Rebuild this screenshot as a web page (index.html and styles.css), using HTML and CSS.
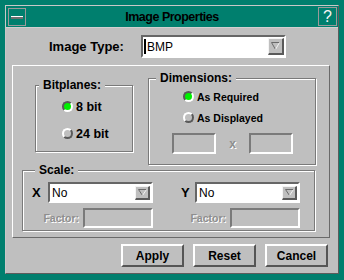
FILE: index.html
```html
<!DOCTYPE html>
<html>
    <head>
        <title>Image Properties</title>
        <link rel="stylesheet" href="styles.css">
    </head>
    <body>
        <div class="window">
            <div class="titlebar">
                <div class="menu_btn"><span class="menu_bar"></span></div>
                <div class="title">Image Properties</div>
                <div class="help_btn">?</div>
            </div>
            <div class="type_row">
                <span class="type_label">Image Type:</span>
                <div class="combo combo_type">
                    <span class="combo_text"><span class="cursor"></span>BMP</span>
                    <span class="drop_btn">
                        <svg width="9" height="8" viewBox="0 0 9 8"><path d="M0.5 0.5H8.5M0.5 0.5L4.5 7.5" stroke="#6a6a6a" fill="none"/><path d="M8.5 0.5L4.5 7.5" stroke="#f0f0f0" fill="none"/></svg>
                    </span>
                </div>
            </div>
            <div class="panel">
                <div class="panel_top">
                    <fieldset class="group bitplanes">
                        <legend>Bitplanes:</legend>
                        <div class="radios">
                            <div class="radio_row"><span class="radio on"></span>8 bit</div>
                            <div class="radio_row"><span class="radio"></span>24 bit</div>
                        </div>
                    </fieldset>
                    <fieldset class="group dimensions">
                        <legend>Dimensions:</legend>
                        <div class="radios">
                            <div class="radio_row"><span class="radio on"></span>As Required</div>
                            <div class="radio_row"><span class="radio"></span>As Displayed</div>
                        </div>
                        <div class="size_row">
                            <span class="field size_field"></span>
                            <span class="dim_text">x</span>
                            <span class="field size_field"></span>
                        </div>
                    </fieldset>
                </div>
                <fieldset class="group scale">
                    <legend>Scale:</legend>
                    <div class="scale_half half_x">
                        <div class="axis_row">
                            <span class="axis">X</span>
                            <div class="combo combo_small">
                                <span class="combo_text">No</span>
                                <span class="drop_btn">
                                    <svg width="9" height="7" viewBox="0 0 9 7"><path d="M0.5 0.5H8.5M0.5 0.5L4.5 6.5" stroke="#6a6a6a" fill="none"/><path d="M8.5 0.5L4.5 6.5" stroke="#f0f0f0" fill="none"/></svg>
                                </span>
                            </div>
                        </div>
                        <div class="factor_row">
                            <span class="dim_text">Factor:</span>
                            <span class="field factor_field"></span>
                        </div>
                    </div>
                    <div class="scale_half half_y">
                        <div class="axis_row">
                            <span class="axis">Y</span>
                            <div class="combo combo_small">
                                <span class="combo_text">No</span>
                                <span class="drop_btn">
                                    <svg width="9" height="7" viewBox="0 0 9 7"><path d="M0.5 0.5H8.5M0.5 0.5L4.5 6.5" stroke="#6a6a6a" fill="none"/><path d="M8.5 0.5L4.5 6.5" stroke="#f0f0f0" fill="none"/></svg>
                                </span>
                            </div>
                        </div>
                        <div class="factor_row">
                            <span class="dim_text">Factor:</span>
                            <span class="field factor_field"></span>
                        </div>
                    </div>
                </fieldset>
            </div>
            <div class="buttons">
                <button type="button" class="btn">Apply</button>
                <button type="button" class="btn">Reset</button>
                <button type="button" class="btn">Cancel</button>
            </div>
        </div>
    </body>
</html>
```

FILE: styles.css
```css
body {
	margin: 0;
	background: #007f6e;
	font-family: "Liberation Sans", Arial, sans-serif;
	color: #000000;
}
.window {
	margin: 5px 0 0 5px;
	width: 334px;
	height: 269px;
	box-sizing: border-box;
	border: 1px solid;
	border-color: #c8c8c8 #5c5c5c #5c5c5c #c8c8c8;
	background: #bfbfbf;
}
.titlebar {
	display: flex;
	align-items: center;
	height: 21px;
	padding: 0 1px 0 2px;
	background: #007f6e;
	border-bottom: 1px solid #d0d0d0;
}
.menu_btn {
	display: flex;
	align-items: center;
	justify-content: center;
	width: 18px;
	height: 18px;
	box-sizing: border-box;
	border: 1px solid #9a9a9a;
}
.menu_bar {
	width: 12px;
	height: 1px;
	margin-top: 1px;
	background: #ffffff;
	border-bottom: 2px solid #6e6e6e;
}
.title {
	flex: 1;
	text-align: center;
	font-size: 12.5px;
	font-weight: bold;
	letter-spacing: -0.5px;
}
.help_btn {
	width: 19px;
	height: 19px;
	box-sizing: border-box;
	border: 1px solid #9a9a9a;
	color: #f4f4f4;
	font-size: 16px;
	line-height: 18px;
	text-align: center;
}
.type_row {
	display: flex;
	align-items: center;
	margin: 7px 0 0 43px;
}
.type_label {
	width: 92px;
	font-size: 13px;
	font-weight: bold;
}
.combo {
	display: flex;
	align-items: center;
	justify-content: space-between;
	box-sizing: border-box;
	border: 2px solid;
	border-color: #666666 #ffffff #ffffff #666666;
	background: #ffffff;
}
.combo_type {
	width: 145px;
	height: 23px;
}
.combo_small {
	width: 105px;
	height: 21px;
	padding-right: 1px;
}
.combo_text {
	display: flex;
	align-items: center;
	padding-left: 2px;
	font-size: 12px;
}
.cursor {
	width: 2px;
	height: 15px;
	margin: 0 1px 0 -1px;
	background: #000000;
}
.drop_btn {
	display: flex;
	align-items: center;
	justify-content: center;
	width: 16px;
	height: 17px;
	box-sizing: border-box;
	border: solid;
	border-width: 1px 2px 2px 1px;
	border-color: #f4f4f4 #5a5a5a #5a5a5a #f4f4f4;
	background: #bfbfbf;
}
.combo_small .drop_btn {
	width: 15px;
	height: 14px;
}
.panel {
	width: 318px;
	height: 173px;
	margin: 7px 0 0 6px;
	box-sizing: border-box;
	border: 1px solid;
	border-color: #ffffff #6a6a6a #6a6a6a #ffffff;
}
.panel_top {
	display: flex;
	align-items: flex-start;
}
.group {
	margin: 0;
	padding: 0;
	min-width: 0;
	box-sizing: border-box;
	border: 1px solid #7a7a7a;
	box-shadow: inset 1px 1px 0 #ffffff, 1px 1px 0 #ffffff;
}
.group legend {
	padding: 0 4px;
	font-size: 12px;
	font-weight: bold;
	line-height: 14px;
	background: #bfbfbf;
}
.bitplanes {
	width: 98px;
	height: 74px;
	margin: 12px 0 0 22px;
}
.bitplanes legend {
	margin-left: 3px;
}
.dimensions {
	width: 168px;
	height: 94px;
	margin: 5px 0 0 15px;
}
.dimensions legend {
	margin-left: 7px;
}
.radios {
	padding-top: 1px;
}
.radio_row {
	display: flex;
	align-items: center;
	gap: 3px;
	font-weight: bold;
}
.bitplanes .radio_row {
	height: 27px;
	padding-left: 26px;
	font-size: 12.5px;
}
.dimensions .radio_row {
	height: 21px;
	padding-left: 34px;
	font-size: 10.5px;
}
.radio {
	width: 11px;
	height: 11px;
	box-sizing: border-box;
	border: 2px solid;
	border-radius: 50%;
	border-color: #ffffff #5a5a5a #5a5a5a #ffffff;
}
.radio.on {
	border-color: #5a5a5a #ffffff #ffffff #5a5a5a;
	background: #00f000;
}
.field {
	box-sizing: border-box;
	border: 2px solid;
	border-color: #7a7a7a #ffffff #ffffff #7a7a7a;
}
.size_row {
	display: flex;
	align-items: center;
	margin-top: 5px;
	padding-left: 23px;
}
.size_field {
	width: 44px;
	height: 21px;
}
.size_row .dim_text {
	width: 33px;
	text-align: center;
	font-size: 12px;
}
.dim_text {
	font-weight: bold;
	color: #8e8e8e;
	text-shadow: 1px 1px 0 #ffffff;
}
.scale {
	display: flex;
	width: 293px;
	height: 68px;
	margin: -2px 0 0 9px;
}
.scale legend {
	margin-left: 12px;
}
.scale_half {
	display: flex;
	flex-direction: column;
	align-items: flex-end;
	gap: 5px;
	margin-top: 5px;
}
.half_x {
	width: 121px;
	margin-left: 9px;
}
.half_y {
	width: 119px;
	margin-left: 28px;
}
.axis_row {
	display: flex;
	align-items: center;
}
.axis {
	width: 16px;
	font-size: 13px;
	font-weight: bold;
}
.half_y .axis {
	width: 14px;
}
.factor_row {
	display: flex;
	align-items: center;
	gap: 4px;
	font-size: 10.5px;
}
.factor_field {
	width: 70px;
	height: 20px;
}
.buttons {
	display: flex;
	justify-content: flex-end;
	gap: 9px;
	margin-top: 6px;
	padding-right: 10px;
}
.btn {
	width: 63px;
	height: 23px;
	padding: 0;
	box-sizing: border-box;
	border: 2px solid;
	border-color: #ffffff #555555 #555555 #ffffff;
	background: #bfbfbf;
	font-family: "Liberation Sans", Arial, sans-serif;
	font-size: 12px;
	font-weight: bold;
	color: #000000;
}
```
